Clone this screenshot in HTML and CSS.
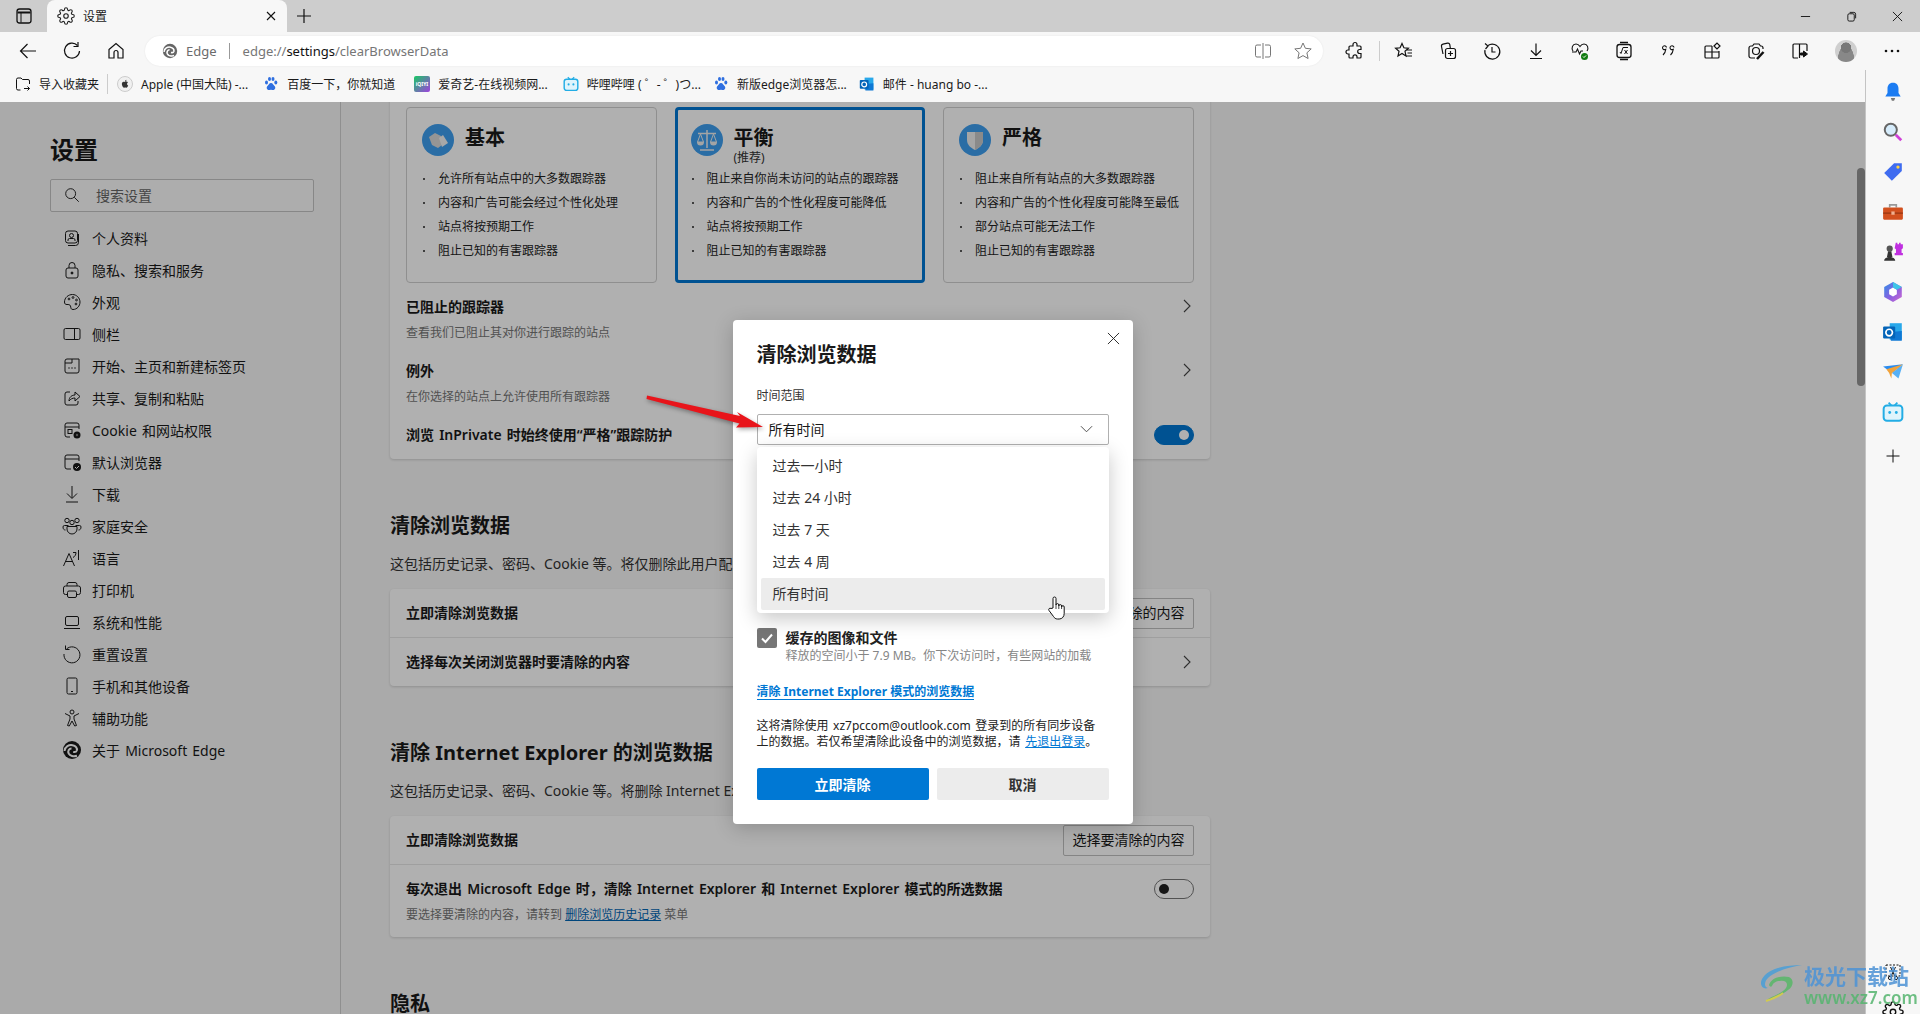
FILE: index.html
```html
<!DOCTYPE html>
<html lang="zh-CN">

<head>
    <meta charset="UTF-8">
    <title>设置</title>
    <link rel="stylesheet" href="styles.css">
</head>

<body>
    <svg class="defs" width="0" height="0">
        <symbol id="edge" viewBox="0 0 20 20">
            <circle cx="10" cy="10" r="9" fill="currentColor" stroke="none" />
            <path d="M2.500 11C3 6.500 7 4.500 10.500 5.200c3.200.6 5 3 4.300 5.300-.5 1.400-2.300 1.700-3.600 1.400" fill="none" stroke="#fff" stroke-width="2" />
            <path d="M9.500 8.500c-2.500 0-4 2.500-2.800 5 1.200 2.300 4.800 3.500 8.300 2.200" fill="none" stroke="#fff" stroke-width="2" />
        </symbol>
        <symbol id="chev" viewBox="0 0 12 16">
            <path d="M3 2l6 6-6 6" fill="none" stroke="currentColor" stroke-width="1.100" />
        </symbol>
        <symbol id="paw" viewBox="0 0 16 16">
            <g fill="#2f6fe0">
                <ellipse cx="3.500" cy="6.500" rx="1.500" ry="2" />
                <ellipse cx="6.500" cy="3" rx="1.500" ry="2" />
                <ellipse cx="10" cy="3" rx="1.500" ry="2" />
                <ellipse cx="12.800" cy="6.500" rx="1.500" ry="2" />
                <path d="M8 7c-2 0-2.200 2-3.500 3-1.500 1.200-.8 4 1.500 4 1 0 1.300-.3 2-.3s1 .3 2 .3c2.300 0 3-2.800 1.500-4C10.200 9 10 7 8 7z" />
            </g>
        </symbol>
        <symbol id="bili" viewBox="0 0 20 20">
            <path d="M6 1.500l2.500 2.500M14 1.500L11.500 4" fill="none" stroke="#23ade5" stroke-width="1.600" />
            <rect x="1.500" y="4" width="17" height="14" rx="3" fill="#dff4fc" stroke="#23ade5" stroke-width="1.800" />
            <circle cx="7" cy="10.500" r="1.300" fill="#23ade5" />
            <circle cx="13" cy="10.500" r="1.300" fill="#23ade5" />
        </symbol>
        <symbol id="outlook" viewBox="0 0 20 20">
            <path d="M7 2h11v15H7z" fill="#28a8ea" />
            <path d="M8 10l10-1v9H8z" fill="#0f78d4" />
            <rect x="1" y="5" width="11" height="11" rx="1" fill="#0364b8" />
            <circle cx="6.500" cy="10.500" r="3" fill="none" stroke="#fff" stroke-width="1.500" />
        </symbol>
        <symbol id="gear" viewBox="0 0 24 24">
            <circle cx="12" cy="12" r="3" fill="none" stroke="currentColor" stroke-width="1.500" />
            <path fill="none" stroke="currentColor" stroke-width="1.500" d="M19.400 15a1.650 1.650 0 0 0 .33 1.820l.06.06a2 2 0 0 1 0 2.830 2 2 0 0 1-2.830 0l-.06-.06a1.650 1.650 0 0 0-1.820-.33 1.650 1.650 0 0 0-1 1.510V21a2 2 0 0 1-2 2 2 2 0 0 1-2-2v-.09A1.650 1.650 0 0 0 9 19.400a1.650 1.650 0 0 0-1.820.33l-.06.06a2 2 0 0 1-2.830 0 2 2 0 0 1 0-2.830l.06-.06a1.650 1.650 0 0 0 .33-1.820 1.650 1.650 0 0 0-1.510-1H3a2 2 0 0 1-2-2 2 2 0 0 1 2-2h.09A1.650 1.650 0 0 0 4.600 9a1.650 1.650 0 0 0-.33-1.820l-.06-.06a2 2 0 0 1 0-2.830 2 2 0 0 1 2.830 0l.06.06a1.650 1.650 0 0 0 1.820.33H9a1.650 1.650 0 0 0 1-1.510V3a2 2 0 0 1 2-2 2 2 0 0 1 2 2v.09a1.650 1.650 0 0 0 1 1.510 1.650 1.650 0 0 0 1.820-.33l.06-.06a2 2 0 0 1 2.830 0 2 2 0 0 1 0 2.830l-.06.06a1.650 1.650 0 0 0-.33 1.820V9a1.650 1.650 0 0 0 1.510 1H21a2 2 0 0 1 2 2 2 2 0 0 1-2 2h-.09a1.650 1.650 0 0 0-1.510 1z" />
        </symbol>
    </svg>

    <div class="browser">
        <!-- 标签栏 -->
        <div class="tabstrip">
            <div class="tab-actions">
                <svg class="ic" viewBox="0 0 20 20"><rect x="3" y="3" width="14" height="14" rx="2.500" stroke-width="1.300" /><path d="M3.500 6.500h13" stroke-width="2" /><path d="M7 7v9.500" stroke-width="1" /></svg>
            </div>
            <div class="tab">
                <svg class="tab-gear"><use href="#gear" /></svg>
                <span class="tab-title">设置</span>
                <svg class="tab-close" viewBox="0 0 12 12"><path d="M2 2l8 8M10 2l-8 8" stroke="#111" stroke-width="1.100" /></svg>
            </div>
            <div class="tab-new">
                <svg class="ic" viewBox="0 0 20 20"><path d="M10 3v14M3 10h14" stroke-width="1.200" /></svg>
            </div>
            <div class="win-controls">
                <div class="win-btn"><svg viewBox="0 0 12 12"><path d="M1 6h10" stroke="#111" /></svg></div>
                <div class="win-btn"><svg viewBox="0 0 12 12"><rect x="2" y="3" width="7" height="8" rx="1.500" fill="none" stroke="#111" /><path d="M4 1.500h4.500a2 2 0 0 1 2 2V8" fill="none" stroke="#111" /></svg></div>
                <div class="win-btn"><svg viewBox="0 0 12 12"><path d="M1 1l10 10M11 1L1 11" stroke="#111" /></svg></div>
            </div>
        </div>

        <!-- 地址栏 -->
        <div class="toolbar">
            <div class="tb-btn"><svg class="ic" viewBox="0 0 20 20"><path d="M18 10H2.500M9.500 3l-7 7 7 7" stroke-width="1.200" /></svg></div>
            <div class="tb-btn"><svg class="ic" viewBox="0 0 20 20"><path d="M15.500 4.500A7.500 7.500 0 1 0 17.500 10" stroke-width="1.200" /><path d="M16 1v4.500h-4.500" stroke-width="1.200" /></svg></div>
            <div class="tb-btn"><svg class="ic" viewBox="0 0 20 20"><path d="M3 8.500L10 2.500l7 6V17h-5v-5.500a2 2 0 0 0-4 0V17H3z" stroke-width="1.200" /></svg></div>
            <div class="address">
                <svg class="addr-logo"><use href="#edge" /></svg>
                <span class="addr-name">Edge</span>
                <span class="addr-sep"></span>
                <span class="addr-url">edge://<b>settings</b>/clearBrowserData</span>
                <div class="addr-icons">
                    <svg class="ic grey" viewBox="0 0 20 20"><path d="M10 2v16M8 4H4a1.500 1.500 0 0 0-1.500 1.500v9A1.500 1.500 0 0 0 4 16h4M12 4h4a1.500 1.500 0 0 1 1.500 1.500v9A1.500 1.500 0 0 1 16 16h-4" /></svg>
                    <svg class="ic grey" viewBox="0 0 20 20"><path d="M10 2l2.400 5.300 5.800.6-4.300 3.900 1.200 5.700-5.100-2.900-5.100 2.900 1.200-5.700-4.300-3.900 5.800-.6z" /></svg>
                </div>
            </div>
            <div class="tb-btn first-ext"><svg class="ic" viewBox="0 0 20 20"><path d="M8 3.500a2 2 0 0 1 4 0V5h3a1 1 0 0 1 1 1v2.500h-1.300a2 2 0 0 0 0 4H16V16a1 1 0 0 1-1 1h-3v-1.200a2 2 0 0 0-4 0V17H5a1 1 0 0 1-1-1v-3H3a2 2 0 0 1 0-4h1V6a1 1 0 0 1 1-1h3z" stroke-width="1.200" /></svg></div>
            <span class="tb-sep"></span>
            <div class="tb-btn"><svg class="ic" viewBox="0 0 20 20"><path d="M8 2.500l1.900 4.300 4.500.5-3.400 3 1 4.600L8 12.500l-4 2.400 1-4.600-3.400-3 4.500-.5zM13 9h5M13.500 12h4.500M12 15h6" stroke-width="1.200" /></svg></div>
            <div class="tb-btn"><svg class="ic" viewBox="0 0 20 20"><path d="M5 13L3.500 5.500A2 2 0 0 1 5 3.200L9.500 2.200a2 2 0 0 1 2.300 1.500L12.300 7" stroke-width="1.200" /><rect x="7.500" y="7.500" width="10" height="10" rx="2" stroke-width="1.200" /><path d="M12.500 10v5M10 12.500h5" stroke-width="1.200" /></svg></div>
            <div class="tb-btn"><svg class="ic" viewBox="0 0 20 20"><path d="M6 4.500A7.500 7.500 0 1 1 3 9" stroke-width="1.200" /><path d="M3 2.500l3 2.500-2.500 3M10 6v5h3.500" stroke-width="1.200" /></svg></div>
            <div class="tb-btn"><svg class="ic" viewBox="0 0 20 20"><path d="M10 2.500v11.500M5 9.500l5 5 5-5M4 17.500h12" stroke-width="1.200" /></svg></div>
            <div class="tb-btn"><svg class="ic" viewBox="0 0 20 20"><path d="M3 10C1 7 2.500 3 6 3c2 0 3 1 4 2.500C11 4 12 3 14 3c3.500 0 5 4 3 7M2 11h4l1.500-3 2 5 1.500-3h2" stroke-width="1.100" /><circle cx="14.500" cy="15.500" r="3.500" fill="#107c10" stroke="none" /><path d="M13 15.500l1 1 2-2" stroke="#fff" /></svg></div>
            <div class="tb-btn"><svg class="ic" viewBox="0 0 20 20"><rect x="3" y="3.500" width="14" height="13" rx="2.500" stroke-width="1.300" /><path d="M6 1.500h8M6 18.500h8" stroke-width="1.300" /><path d="M6 11l1 1.500L9 6.500h5M10.500 9l3 4M13.500 9l-3 4" /></svg></div>
            <div class="tb-btn"><svg class="ic" viewBox="0 0 20 20"><path d="M8.500 6.500a2 2 0 1 0-3 2c.8.300 1.300.2 2.300-.2-.2 2.200-1 4-2.800 5.700M16 6.500a2 2 0 1 0-3 2c.8.300 1.300.2 2.300-.2-.2 2.200-1 4-2.800 5.700" stroke-width="1.100" /></svg></div>
            <div class="tb-btn"><svg class="ic" viewBox="0 0 20 20"><path d="M10 5H4a1 1 0 0 0-1 1v10a1 1 0 0 0 1 1h12a1 1 0 0 0 1-1v-6M3 11h14M10 5v12" stroke-width="1.200" /><path d="M12 5l3-3 3 3-3 3z" stroke-width="1.200" /></svg></div>
            <div class="tb-btn"><svg class="ic" viewBox="0 0 20 20"><path d="M9 17H5a2 2 0 0 1-2-2V7a2 2 0 0 1 2-2h1.500L8 3h5l1.500 2H15a2 2 0 0 1 2 2v1" stroke-width="1.200" /><circle cx="10" cy="10" r="3.500" stroke-width="1.200" /><path d="M11 18l6.500-7" stroke-width="2.500" /></svg></div>
            <div class="tb-btn"><svg class="ic" viewBox="0 0 20 20"><path d="M8 17H4a1 1 0 0 1-1-1V4a1 1 0 0 1 1-1h12a1 1 0 0 1 1 1v6M9.500 3v14" stroke-width="1.200" /><path d="M10.500 12h3v-2l4 3-4 3v-2h-3z" fill="#111" /></svg></div>
            <div class="avatar"></div>
            <div class="tb-btn more"><svg class="ic" viewBox="0 0 20 20"><circle cx="4" cy="10" r="1.300" fill="#111" stroke="none" /><circle cx="10" cy="10" r="1.300" fill="#111" stroke="none" /><circle cx="16" cy="10" r="1.300" fill="#111" stroke="none" /></svg></div>
        </div>

        <div class="work">
            <div class="work-left">
                <!-- 收藏夹栏 -->
                <div class="bookmarks">
                    <div class="bm"><svg class="ic16" viewBox="0 0 16 16"><path d="M5.500 14H3a1.500 1.500 0 0 1-1.500-1.500v-9A1.500 1.500 0 0 1 3 2h3l1.500 1.500H13A1.500 1.500 0 0 1 14.500 5v3M9 12.500h5.500M12.500 10.500l2 2-2 2" fill="none" stroke="#111" /></svg>导入收藏夹</div>
                    <span class="bm-sep"></span>
                    <div class="bm"><svg class="ic16" viewBox="0 0 16 16"><circle cx="8" cy="8" r="7.500" fill="#f0f0f0" stroke="#ccc" /><path d="M8 6c-2.500-1-3.500 1-3 3 .4 1.700 1.500 3 2.200 2.800.5-.1.600-.3 1-.3s.5.200 1 .3c.7.200 1.600-1 2-2.200-1.500-.7-1.500-2.800-.2-3.400C10 5.300 9 5.500 8 6zM8 5.500c0-1 .8-1.800 1.500-1.800 0 1-.7 1.800-1.500 1.800z" fill="#333" /></svg>Apple (中国大陆) -...</div>
                    <div class="bm"><svg class="ic16"><use href="#paw" /></svg>百度一下，你就知道</div>
                    <div class="bm bm-iqiyi"><svg class="ic16" viewBox="0 0 16 16"><defs><linearGradient id="qy" x1="0" y1="0" x2="1" y2="1"><stop offset="0" stop-color="#18c964" /><stop offset="1" stop-color="#a040e0" /></linearGradient></defs><rect width="16" height="16" rx="2" fill="url(#qy)" /><text x="8" y="10" font-size="5" font-weight="700" fill="#fff" text-anchor="middle">iQIYI</text></svg>爱奇艺-在线视频网...</div>
                    <div class="bm"><svg class="ic16"><use href="#bili" /></svg>哔哩哔哩 ( ゜- ゜)つ...</div>
                    <div class="bm bm-pull"><svg class="ic16"><use href="#paw" /></svg>新版edge浏览器怎...</div>
                    <div class="bm bm-pull"><svg class="ic16"><use href="#outlook" /></svg>邮件 - huang bo -...</div>
                </div>

                <div class="page">
                    <!-- 左侧菜单 -->
                    <aside class="sidebar">
                        <h1 class="side-title">设置</h1>
                        <div class="search">
                            <svg class="ic" viewBox="0 0 20 20"><circle cx="8.500" cy="8.500" r="5.500" /><path d="M12.500 12.500l5 5" /></svg>
                            <span>搜索设置</span>
                        </div>
                        <ul class="menu">
                            <li><svg class="ic" viewBox="0 0 20 20"><rect x="3.500" y="3" width="12" height="12" rx="2.500" /><path d="M6 17.500h7.500a3 3 0 0 0 3-3V6" /><circle cx="9.500" cy="7.500" r="2" /><path d="M6 13v-1a1.500 1.500 0 0 1 1.500-1.500h4A1.500 1.500 0 0 1 13 12v1" /></svg>个人资料</li>
                            <li><svg class="ic" viewBox="0 0 20 20"><rect x="4" y="8" width="12" height="10" rx="2" /><path d="M7 8V5.500a3 3 0 0 1 6 0V8" /><circle cx="10" cy="13" r="1" fill="#1a1a1a" /></svg>隐私、搜索和服务</li>
                            <li><svg class="ic" viewBox="0 0 20 20"><path d="M2.500 10C2.500 5.500 6.500 2.500 10.500 2.500s7.500 3.500 7.500 7.500-3 7.500-7 7.500c-2.500 0-2-2-2.500-3.500s-2-1.500-3.500-1.500-2.500-.5-2.500-2.500z" /><circle cx="7" cy="7" r=".9" /><circle cx="11" cy="5.500" r=".9" /><circle cx="14.500" cy="8" r=".9" /><circle cx="14" cy="12" r=".9" /></svg>外观</li>
                            <li><svg class="ic" viewBox="0 0 20 20"><rect x="2" y="4.500" width="16" height="11" rx="1.500" /><path d="M12.500 4.500v11" /></svg>侧栏</li>
                            <li><svg class="ic" viewBox="0 0 20 20"><path d="M10 3H5a2 2 0 0 0-2 2v10a2 2 0 0 0 2 2h10a2 2 0 0 0 2-2V3h-7v4H3" /><path d="M6.500 12h1M9.500 12h1M12.500 12h1" stroke-width="1.500" /></svg>开始、主页和新建标签页</li>
                            <li><svg class="ic" viewBox="0 0 20 20"><path d="M8 4H5a2 2 0 0 0-2 2v9a2 2 0 0 0 2 2h9a2 2 0 0 0 2-2v-2" /><path d="M7 13c0-4 3-6 6-6V4l5 4.500-5 4.500v-3c-2.500 0-4.500 1-6 3z" /></svg>共享、复制和粘贴</li>
                            <li><svg class="ic" viewBox="0 0 20 20"><path d="M8 17H5a2 2 0 0 1-2-2V5a2 2 0 0 1 2-2h10a2 2 0 0 1 2 2v4M3 7h14" /><rect x="6" y="9.500" width="4" height="4" /><circle cx="15" cy="15" r="3.500" fill="#1a1a1a" stroke="none" /><circle cx="15" cy="15" r="1.200" fill="#777" stroke="none" /></svg>Cookie 和网站权限</li>
                            <li><svg class="ic" viewBox="0 0 20 20"><path d="M9 17H5a2 2 0 0 1-2-2V5a2 2 0 0 1 2-2h10a2 2 0 0 1 2 2v4M3 7h14" /><circle cx="15" cy="15" r="4" fill="#1a1a1a" stroke="none" /><path d="M13 15l1.500 1.500 2.500-2.500" stroke="#fff" /></svg>默认浏览器</li>
                            <li><svg class="ic" viewBox="0 0 20 20"><path d="M10 2v12M5 9.500l5 5 5-5M4 18h12" /></svg>下载</li>
                            <li><svg class="ic" viewBox="0 0 20 20"><circle cx="5" cy="4.500" r="2.200" /><circle cx="15" cy="4.500" r="2.200" /><circle cx="10" cy="6.500" r="2.200" /><path d="M6.500 9.500h-4A1.500 1.500 0 0 0 1 11c0 2 1 3 2.500 3M13.500 9.500h4A1.500 1.500 0 0 1 19 11c0 2-1 3-2.500 3M5 10.500h10v2.500a5 5 0 0 1-10 0z" /></svg>家庭安全</li>
                            <li><svg class="ic" viewBox="0 0 20 20"><path d="M1.500 18L7 5.500 12.500 18M3.500 13.500h7M11 4.500h3c0 2-1 4-3 5M16.500 2v10" /></svg>语言</li>
                            <li><svg class="ic" viewBox="0 0 20 20"><path d="M5 6V4.500A2 2 0 0 1 7 2.500h6a2 2 0 0 1 2 2V6M5 14.500H3.500a2 2 0 0 1-2-2V8a2 2 0 0 1 2-2h13a2 2 0 0 1 2 2v4.500a2 2 0 0 1-2 2H15" /><rect x="5.500" y="11" width="9" height="6.500" rx="1.500" /></svg>打印机</li>
                            <li><svg class="ic" viewBox="0 0 20 20"><rect x="3.500" y="4.500" width="13" height="9" rx="1.500" /><path d="M2 16.500h16" /></svg>系统和性能</li>
                            <li><svg class="ic" viewBox="0 0 20 20"><path d="M4.500 5A8 8 0 1 1 2 10" /><path d="M3.500 1.500v4h4" /></svg>重置设置</li>
                            <li><svg class="ic" viewBox="0 0 20 20"><rect x="5" y="2" width="10" height="16" rx="1.500" /><path d="M9 15.500h2" /></svg>手机和其他设备</li>
                            <li><svg class="ic" viewBox="0 0 20 20"><circle cx="10" cy="4" r="2" /><path d="M3 5.500l5 2.500v3L5.500 17.500l1.800.5L10 13l2.700 5 1.800-.5L12 11V8l5-2.500" /></svg>辅助功能</li>
                            <li><svg class="ic solid"><use href="#edge" /></svg>关于 Microsoft Edge</li>
                        </ul>
                    </aside>

                    <!-- 主内容 -->
                    <main class="content">
                        <section class="card track">
                            <div class="tiers">
                                <div class="tier">
                                    <div class="tier-head">
                                        <svg class="tier-ic" viewBox="0 0 32 32"><circle cx="16" cy="16" r="16" fill="#3e9ff0" /><path d="M7 13l6-4 6 3 1 9-4 3-6-3z" fill="#d8d8d8" /><path d="M17 14l4-3 5 8-6 4z" fill="#f4f4f4" /></svg>
                                        <div class="tier-name">基本</div>
                                    </div>
                                    <ul class="tier-list">
                                        <li>允许所有站点中的大多数跟踪器</li>
                                        <li>内容和广告可能会经过个性化处理</li>
                                        <li>站点将按预期工作</li>
                                        <li>阻止已知的有害跟踪器</li>
                                    </ul>
                                </div>
                                <div class="tier selected">
                                    <div class="tier-head">
                                        <svg class="tier-ic" viewBox="0 0 32 32"><circle cx="16" cy="16" r="16" fill="#3e9ff0" /><path d="M16 6v18M9 26h14M7 9.500h18" stroke="#eee" stroke-width="1.500" fill="none" /><path d="M9.500 10l-3 8h6zM22.500 10l-3 8h6z" fill="none" stroke="#eee" /><path d="M6 18h7a3.500 3.500 0 0 1-7 0zM19 18h7a3.500 3.500 0 0 1-7 0z" fill="#eee" /></svg>
                                        <div>
                                            <div class="tier-name">平衡</div>
                                            <div class="tier-note">(推荐)</div>
                                        </div>
                                    </div>
                                    <ul class="tier-list">
                                        <li>阻止来自你尚未访问的站点的跟踪器</li>
                                        <li>内容和广告的个性化程度可能降低</li>
                                        <li>站点将按预期工作</li>
                                        <li>阻止已知的有害跟踪器</li>
                                    </ul>
                                </div>
                                <div class="tier">
                                    <div class="tier-head">
                                        <svg class="tier-ic" viewBox="0 0 32 32"><circle cx="16" cy="16" r="16" fill="#3e9ff0" /><path d="M8 8h16v8c0 5-4 8-8 10-4-2-8-5-8-10z" fill="#f0f0f0" /><path d="M16 8h8v8c0 5-4 8-8 10z" fill="#c8c8c8" /></svg>
                                        <div class="tier-name">严格</div>
                                    </div>
                                    <ul class="tier-list">
                                        <li>阻止来自所有站点的大多数跟踪器</li>
                                        <li>内容和广告的个性化程度可能降至最低</li>
                                        <li>部分站点可能无法工作</li>
                                        <li>阻止已知的有害跟踪器</li>
                                    </ul>
                                </div>
                            </div>
                            <div class="track-row">
                                <div>
                                    <div class="row-title">已阻止的跟踪器</div>
                                    <div class="row-sub">查看我们已阻止其对你进行跟踪的站点</div>
                                </div>
                                <svg class="chev"><use href="#chev" /></svg>
                            </div>
                            <div class="track-row">
                                <div>
                                    <div class="row-title">例外</div>
                                    <div class="row-sub">在你选择的站点上允许使用所有跟踪器</div>
                                </div>
                                <svg class="chev"><use href="#chev" /></svg>
                            </div>
                            <div class="track-row last">
                                <div class="row-title">浏览 InPrivate 时始终使用“严格”跟踪防护</div>
                                <span class="toggle on"></span>
                            </div>
                        </section>

                        <h2 class="sec-title">清除浏览数据</h2>
                        <p class="sec-sub">这包括历史记录、密码、Cookie 等。将仅删除此用户配置文件中的数据。</p>
                        <section class="card">
                            <div class="row">
                                <div class="row-title">立即清除浏览数据</div>
                                <button class="btn">选择要清除的内容</button>
                            </div>
                            <div class="row">
                                <div class="row-title">选择每次关闭浏览器时要清除的内容</div>
                                <svg class="chev"><use href="#chev" /></svg>
                            </div>
                        </section>

                        <h2 class="sec-title">清除 Internet Explorer 的浏览数据</h2>
                        <p class="sec-sub">这包括历史记录、密码、Cookie 等。将删除 Internet Explorer 和 Internet Explorer 模式中的数据。</p>
                        <section class="card">
                            <div class="row">
                                <div class="row-title">立即清除浏览数据</div>
                                <button class="btn">选择要清除的内容</button>
                            </div>
                            <div class="row tall">
                                <div>
                                    <div class="row-title">每次退出 Microsoft Edge 时，清除 Internet Explorer 和 Internet Explorer 模式的所选数据</div>
                                    <div class="row-sub">要选择要清除的内容，请转到 <a class="dim-link">删除浏览历史记录</a> 菜单</div>
                                </div>
                                <span class="toggle"></span>
                            </div>
                        </section>

                        <h2 class="sec-title">隐私</h2>
                    </main>

                    <!-- 遮罩和对话框 -->
                    <div class="scrollbar"></div>
                    <div class="overlay">
                        <div class="dialog">
                            <svg class="dlg-close" viewBox="0 0 14 14"><path d="M1 1l12 12M13 1L1 13" stroke="#222" /></svg>
                            <h3 class="dlg-title">清除浏览数据</h3>
                            <div class="dlg-label">时间范围</div>
                            <div class="range">
                                <div class="select">
                                    <span>所有时间</span>
                                    <svg viewBox="0 0 14 8"><path d="M1 1l6 6 6-6" fill="none" stroke="#444" /></svg>
                                </div>
                                <ul class="dropdown">
                                    <li>过去一小时</li>
                                    <li>过去 24 小时</li>
                                    <li>过去 7 天</li>
                                    <li>过去 4 周</li>
                                    <li class="active">所有时间</li>
                                </ul>
                            </div>
                            <div class="check-row">
                                <span class="check"><svg viewBox="0 0 20 20"><path d="M5 10.500l3.500 3.500L15 6.500" fill="none" stroke="#fff" stroke-width="2" /></svg></span>
                                <div>
                                    <div class="check-title">缓存的图像和文件</div>
                                    <div class="check-sub">释放的空间小于 7.9 MB。你下次访问时，有些网站的加载</div>
                                </div>
                            </div>
                            <a class="dlg-link">清除 Internet Explorer 模式的浏览数据</a>
                            <p class="dlg-note">这将清除使用 xz7pccom@outlook.com 登录到的所有同步设备上的数据。若仅希望清除此设备中的浏览数据，请 <a>先退出登录</a>。</p>
                            <div class="dlg-btns">
                                <button class="primary">立即清除</button>
                                <button class="cancel">取消</button>
                            </div>
                        </div>
                    </div>
                </div>
            </div>

            <!-- 右侧边栏 -->
            <div class="rail">
                <div class="rail-btn"><svg class="ic22" viewBox="0 0 20 20"><path d="M10 1.500c-3.500 0-5 2.500-5 5.500v4l-2 3h14l-2-3V7c0-3-1.500-5.500-5-5.500z" fill="#1c7cf2" /><path d="M8 15.500h4l-1 2.500H9z" fill="#777" /></svg></div>
                <div class="rail-btn"><svg class="ic22" viewBox="0 0 20 20"><circle cx="8" cy="8" r="5.500" fill="#d6ecfb" stroke="#666" stroke-width="1.800" /><path d="M12.500 12.500l5 5" stroke="#d040d8" stroke-width="2.500" /></svg></div>
                <div class="rail-btn"><svg class="ic22" viewBox="0 0 20 20"><path d="M11 2h7v7l-9 9-7-7z" fill="#3f6cf0" /><circle cx="14.500" cy="5.500" r="1.500" fill="#ffd23f" /></svg></div>
                <div class="rail-btn"><svg class="ic22" viewBox="0 0 20 20"><path d="M7 6V3.500h6V6" fill="none" stroke="#999" stroke-width="1.500" /><rect x="1" y="6" width="18" height="11" rx="1" fill="#d2501e" /><path d="M1 11h18" stroke="#8f3310" /><rect x="8.500" y="9.500" width="3" height="3" fill="#f0b090" /></svg></div>
                <div class="rail-btn"><svg class="ic22" viewBox="0 0 20 20"><circle cx="7" cy="7" r="2.800" fill="#555" /><path d="M5.500 9.500h3l1 5h-5zM2 18c0-2 2-3.500 5-3.500S12 16 12 18z" fill="#333" /><path d="M12.500 1.500h1.500V3h1.500V1.500h1.500V3H19v3.500l-1.200 1v3.500H19v2h-7.500v-2h1.200V7.500l-1.200-1z" fill="#c030e0" /></svg></div>
                <div class="rail-btn"><svg class="ic22" viewBox="0 0 20 20"><defs><linearGradient id="hexa" x1="0" y1="0" x2="1" y2="1"><stop offset="0" stop-color="#2f8fe8" /><stop offset=".55" stop-color="#8a5fe0" /><stop offset="1" stop-color="#d06ad0" /></linearGradient></defs><path d="M10 1l8 4.500v9L10 19l-8-4.500v-9z" fill="url(#hexa)" /><path d="M6.500 8l3.500-2 3.500 2v4L10 14l-3.500-2z" fill="#fff" /><path d="M10 1l8 4.500-4.500 2.500L10 6z" fill="#3ec5e8" /></svg></div>
                <div class="rail-btn"><svg class="ic22"><use href="#outlook" /></svg></div>
                <div class="rail-btn"><svg class="ic22" viewBox="0 0 20 20"><path d="M1 5l18-2-10 8z" fill="#2a8cf0" /><path d="M19 3l-4 13-6-5z" fill="#57b0f5" /><path d="M4 7.500l15-4.500-10 8-.5 5-2-5z" fill="#f2a33a" /></svg></div>
                <div class="rail-btn"><svg class="ic22"><use href="#bili" /></svg></div>
                <div class="rail-btn plus"><svg class="ic" viewBox="0 0 20 20"><path d="M10 3.500v13M3.500 10h13" /></svg></div>
                <div class="rail-btn rail-snip"><svg class="ic" viewBox="0 0 20 20"><rect x="3" y="3" width="14" height="11" stroke-dasharray="2 1.500" /><circle cx="7" cy="16" r="1.600" /><circle cx="13" cy="16" r="1.600" /><path d="M7.500 5l4.500 9.500M12.500 5L8 14.500" /></svg></div>
                <div class="rail-btn rail-gear"><svg class="ic22"><use href="#gear" /></svg></div>
            </div>
        </div>

        <!-- 红色箭头和鼠标 -->
        <svg class="red-arrow" viewBox="640 390 130 45"><path d="M647 395.500l93 20.500-3-4 26 15-27 .5 3.500-4-93-24.500z" fill="#e8141a" /></svg>
        <svg class="hand" viewBox="0 0 18 24"><path d="M5 12V2.500a1.500 1.500 0 0 1 3 0V9a1.400 1.400 0 0 1 2.800 0v1a1.400 1.400 0 0 1 2.800 0v1a1.300 1.300 0 0 1 2.600 0v6.500c0 3-2 5.500-5 5.500H9.500c-2 0-3-1-4-2.500L1 14.500c-1-1.500.8-3 2-2z" fill="#fff" stroke="#111" /><path d="M8 9v4M10.800 10v3M13.600 11v2" stroke="#111" stroke-width=".8" /></svg>

        <!-- 水印 -->
        <div class="watermark">
            <svg class="wm-logo" viewBox="0 0 42 38"><path d="M42 1C26 1 8 4 2 15c-3 6 1 11 6 9-4-1-4-6 0-10C14 8 28 3 42 1z" fill="#4a9fd8" /><path d="M9 21c2-7 12-10 20-8 5 2 5 9-1 13-6 5-16 8-22 11 4-5 16-7 20-13 3-5-1-8-6-7-4 0-7 2-8 5-1 1-2 1-3-1z" fill="#58b868" /><path d="M6 37c6-2 12-4 17-8" stroke="#d8d040" stroke-width="2" fill="none" /></svg>
            <div class="wm-text">
                <div class="wm-cn">极光下载站</div>
                <div class="wm-url">www.xz7.com</div>
            </div>
        </div>
    </div>
</body>

</html>
```

FILE: styles.css
```css
* {
    box-sizing: border-box;
}

html,
body {
    margin: 0;
    height: 100%;
    overflow: hidden;
}

body {
    font-family: "Noto Sans", "Noto Sans CJK SC", sans-serif;
    font-size: 14px;
    color: #1a1a1a;
    background: #f7f7f7;
}

ul {
    list-style: none;
    margin: 0;
    padding: 0;
}

.defs {
    position: absolute;
}

.ic {
    width: 20px;
    height: 20px;
    flex: none;
    fill: none;
    stroke: #111;
    stroke-width: 1;
}

.ic.grey {
    stroke: #777;
}

.ic16 {
    width: 16px;
    height: 16px;
    flex: none;
}

.ic22 {
    width: 22px;
    height: 22px;
    flex: none;
    color: #111;
}

.browser {
    position: relative;
    width: 1920px;
    height: 1014px;
    display: flex;
    flex-direction: column;
    overflow: hidden;
}

/* 标签栏 */
.tabstrip {
    height: 32px;
    flex: none;
    display: flex;
    background: #cdcdcd;
}

.tab-actions {
    width: 47px;
    display: flex;
    align-items: center;
    justify-content: center;
}

.tab {
    width: 240px;
    display: flex;
    align-items: center;
    padding: 0 10px 0 10px;
    background: #f7f7f7;
    border-radius: 8px 8px 0 0;
}

.tab-gear {
    width: 18px;
    height: 18px;
    color: #222;
}

.tab-title {
    flex: 1;
    margin-left: 8px;
    font-size: 12px;
}

.tab-close {
    width: 12px;
    height: 12px;
}

.tab-new {
    width: 34px;
    display: flex;
    align-items: center;
    justify-content: center;
}

.win-controls {
    margin-left: auto;
    display: flex;
}

.win-btn {
    width: 46px;
    display: flex;
    align-items: center;
    justify-content: center;
}

.win-btn svg {
    width: 11px;
    height: 11px;
}

/* 地址栏 */
.toolbar {
    height: 38px;
    flex: none;
    display: flex;
    align-items: center;
    padding: 0 6px;
    background: #f7f7f7;
}

.tb-btn {
    width: 44px;
    flex: none;
    display: flex;
    justify-content: center;
}

.first-ext {
    margin-left: 10px;
}

.tb-sep {
    width: 1px;
    height: 20px;
    margin: 0 2px;
    background: #ccc;
    flex: none;
}

.address {
    flex: 1;
    height: 30px;
    margin: 0 0 0 7px;
    padding: 0 8px 0 17px;
    display: flex;
    align-items: center;
    background: #fff;
    border-radius: 15px;
    box-shadow: 0 0 2px rgba(0, 0, 0, .08);
}

.addr-logo {
    width: 16px;
    height: 16px;
    color: #666;
}

.addr-name {
    margin-left: 8px;
    font-size: 13px;
    color: #6b6b6b;
}

.addr-sep {
    width: 1px;
    height: 16px;
    margin: 0 13px 0 12px;
    background: #999;
}

.addr-url {
    font-size: 13px;
    color: #767676;
}

.addr-url b {
    font-weight: 400;
    color: #111;
}

.addr-icons {
    margin-left: auto;
    display: flex;
    gap: 20px;
    padding-right: 2px;
}

.avatar {
    width: 22px;
    height: 22px;
    flex: none;
    margin-left: 13px;
    border-radius: 50%;
    background: radial-gradient(circle at 50% 35%, #777 0 5px, transparent 5.5px), radial-gradient(ellipse at 50% 95%, #888 0 8px, transparent 8.5px), #cfcfcf;
}

.more {
    margin-left: 13px;
}

/* 工作区 */
.work {
    flex: 1;
    min-height: 0;
    display: flex;
}

.work-left {
    flex: 1;
    min-width: 0;
    display: flex;
    flex-direction: column;
}

/* 收藏夹栏 */
.bookmarks {
    height: 32px;
    flex: none;
    display: flex;
    align-items: center;
    gap: 15px;
    padding: 0 0 4px 15px;
    font-size: 12px;
    white-space: nowrap;
    background: #f7f7f7;
}

.bm {
    display: flex;
    align-items: center;
    gap: 8px;
}

.bm-iqiyi {
    margin-left: 4px;
}

.bm-pull {
    margin-left: -3px;
}

.bm-sep {
    width: 1px;
    height: 20px;
    margin: 0 -6px 0 -7px;
    background: #ccc;
}

/* 设置页 */
.page {
    position: relative;
    flex: 1;
    min-height: 0;
    display: flex;
    overflow: hidden;
}

.sidebar {
    width: 341px;
    flex: none;
    padding: 32px 0 0 50px;
    border-right: 1px solid #cfcfcf;
}

.side-title {
    margin: 0;
    font-size: 24px;
    line-height: 32px;
    font-weight: 700;
}

.search {
    width: 264px;
    height: 33px;
    margin-top: 13px;
    padding: 0 0 2px 12px;
    display: flex;
    align-items: center;
    gap: 15px;
    color: #666;
    background: #fbfbfb;
    border: 1px solid #c4c4c4;
    border-radius: 2px;
}

.search .ic {
    width: 18px;
    height: 18px;
}

.menu {
    margin-top: 10px;
    word-spacing: 1.500px;
}

.menu li {
    height: 32px;
    padding-left: 12px;
    display: flex;
    align-items: center;
    gap: 10px;
}

.menu .ic {
    stroke: #1a1a1a;
}

.menu .solid {
    stroke: none;
    color: #1a1a1a;
}

.content {
    flex: 1;
    min-width: 0;
    padding-left: 49px;
}

.card {
    width: 820px;
    background: #fff;
    border-radius: 4px;
    box-shadow: 0 1px 3px rgba(0, 0, 0, .16);
}

.track {
    margin-top: -10px;
    padding: 15px 16px 8px;
}

.tiers {
    display: flex;
    gap: 18px;
}

.tier {
    width: 251px;
    height: 176px;
    padding: 16px 15px 0;
    border: 1px solid #cfcfcf;
    border-radius: 4px;
}

.tier.selected {
    padding: 14px 13px 0;
    border: 3px solid #0078d4;
}

.tier-head {
    height: 43px;
    display: flex;
    gap: 11px;
}

.tier-ic {
    width: 32px;
    height: 32px;
    flex: none;
}

.tier-name {
    font-size: 20px;
    line-height: 28px;
    font-weight: 700;
}

.tier-note {
    margin-top: -1px;
    font-size: 12px;
    line-height: 14px;
    color: #333;
}

.tier-list li {
    position: relative;
    height: 24px;
    padding-left: 16px;
    font-size: 12px;
    line-height: 24px;
    white-space: nowrap;
    color: #222;
}

.tier-list li::before {
    content: "";
    position: absolute;
    left: 1px;
    top: 11px;
    width: 2px;
    height: 2px;
    border-radius: 50%;
    background: #222;
}

.track-row {
    height: 64px;
    padding-top: 6px;
    display: flex;
    justify-content: space-between;
}

.tiers+.track-row {
    margin-top: 8px;
}

.track-row.last {
    height: 32px;
    padding-top: 0;
    align-items: center;
}

.row-title {
    font-weight: 600;
    line-height: 20px;
    word-spacing: 1.500px;
}

.row-sub {
    margin-top: 7px;
    font-size: 12px;
    line-height: 18px;
    color: #767676;
}

.chev {
    width: 12px;
    height: 16px;
    margin: 1px 1px 0 0;
    color: #444;
}

.row {
    height: 48px;
    padding: 0 16px;
    display: flex;
    align-items: center;
    justify-content: space-between;
}

.row+.row {
    height: 49px;
    border-top: 1px solid #e6e6e6;
}

.row.tall {
    height: 73px;
    padding-top: 14px;
    align-items: flex-start;
}

.row .chev {
    margin-top: -1px;
}

.btn {
    width: 131px;
    height: 31px;
    padding: 0 0 2px;
    font: inherit;
    color: #1a1a1a;
    background: #fff;
    border: 1px solid #c0c0c0;
    border-radius: 2px;
}

.toggle {
    position: relative;
    width: 40px;
    height: 20px;
    flex: none;
    border: 1px solid #777;
    border-radius: 10px;
}

.toggle::after {
    content: "";
    position: absolute;
    left: 4px;
    top: 4px;
    width: 10px;
    height: 10px;
    border-radius: 50%;
    background: #222;
}

.toggle.on {
    background: #0078d4;
    border-color: #0078d4;
}

.toggle.on::after {
    left: auto;
    right: 4px;
    background: #fff;
}

.sec-title {
    margin: 53px 0 -1px;
    font-size: 20px;
    line-height: 28px;
    font-weight: 700;
}

.sec-sub {
    margin: 15px 0;
    line-height: 20px;
    color: #333;
}

.dim-link {
    color: #0066b4;
    text-decoration: underline;
}

.scrollbar {
    position: absolute;
    right: 0;
    top: 66px;
    width: 8px;
    height: 218px;
    background: #949494;
    border-radius: 4px;
}

/* 遮罩和对话框 */
.overlay {
    position: absolute;
    inset: 0;
    display: flex;
    justify-content: center;
    align-items: flex-start;
    padding-top: 218px;
    background: rgba(0, 0, 0, .31);
}

.dialog {
    position: relative;
    width: 400px;
    padding: 21px 24px 24px;
    background: #fff;
    border-radius: 4px;
    box-shadow: 0 4px 20px rgba(0, 0, 0, .2);
}

.dlg-close {
    position: absolute;
    top: 12px;
    right: 13px;
    width: 13px;
    height: 13px;
}

.dlg-title {
    margin: 0;
    font-size: 20px;
    line-height: 28px;
    font-weight: 700;
}

.dlg-label {
    margin-top: 19px;
    font-size: 12px;
    line-height: 16px;
    color: #333;
}

.range {
    position: relative;
    margin: 10px 0 183px;
}

.select {
    height: 31px;
    padding: 0 11px 2px;
    display: flex;
    align-items: center;
    justify-content: space-between;
    border: 1px solid #b0b0b0;
    border-radius: 2px;
}

.select svg {
    width: 13px;
    height: 8px;
    margin-right: 4px;
}

.dropdown {
    position: absolute;
    top: 33px;
    left: 0;
    right: 0;
    padding: 3px 4px;
    background: #fff;
    border-radius: 4px;
    box-shadow: 0 6px 20px rgba(0, 0, 0, .22);
}

.dropdown li {
    height: 32px;
    padding-left: 12px;
    line-height: 32px;
    color: #333;
    border-radius: 2px;
}

.dropdown .active {
    background: #ececec;
}

.check-row {
    display: flex;
    gap: 9px;
}

.check {
    width: 20px;
    height: 20px;
    flex: none;
    background: #767676;
    border-radius: 2px;
}

.check svg {
    display: block;
}

.check-title {
    font-weight: 600;
    line-height: 20px;
    color: #222;
}

.check-sub {
    font-size: 12px;
    line-height: 16px;
    white-space: nowrap;
    color: #858585;
}

.dlg-link {
    display: block;
    width: fit-content;
    margin-top: 20px;
    font-size: 12px;
    line-height: 15px;
    font-weight: 700;
    color: #0078d4;
    border-bottom: 1px solid #0078d4;
}

.dlg-note {
    width: 345px;
    margin: 18px 0 0;
    font-size: 12px;
    line-height: 16px;
    word-spacing: 1.500px;
    color: #222;
}

.dlg-note a {
    color: #0078d4;
    text-decoration: underline;
}

.dlg-btns {
    margin-top: 18px;
    display: flex;
    gap: 8px;
}

.dlg-btns button {
    flex: 1;
    height: 32px;
    font: inherit;
    font-weight: 700;
    border: 0;
    border-radius: 2px;
}

.primary {
    color: #fff;
    background: #0078d4;
}

.cancel {
    color: #333;
    background: #ececec;
}

/* 右侧边栏 */
.rail {
    width: 55px;
    flex: none;
    display: flex;
    flex-direction: column;
    padding-top: 2px;
    background: #f7f7f7;
    border-left: 1px solid #c4c4c4;
}

.rail-btn {
    height: 40px;
    flex: none;
    display: flex;
    align-items: center;
    justify-content: center;
}

.plus {
    margin-top: 4px;
}

.rail-snip {
    margin-top: auto;
}

.rail-gear {
    margin-bottom: -18px;
}

/* 覆盖层上的东西 */
.red-arrow {
    position: absolute;
    left: 640px;
    top: 390px;
    width: 130px;
    height: 45px;
    filter: drop-shadow(1px 2px 2px rgba(0, 0, 0, .35));
}

.hand {
    position: absolute;
    left: 1048px;
    top: 596px;
    width: 18px;
    height: 24px;
}

.watermark {
    position: absolute;
    left: 1760px;
    top: 964px;
    display: flex;
    gap: 2px;
    opacity: .85;
}

.wm-logo {
    width: 42px;
    height: 38px;
}

.wm-cn {
    font-size: 21px;
    line-height: 24px;
    font-weight: 700;
    white-space: nowrap;
    color: #4d93d6;
}

.wm-url {
    font-size: 17px;
    line-height: 20px;
    font-weight: 600;
    color: #55b56f;
}
```
